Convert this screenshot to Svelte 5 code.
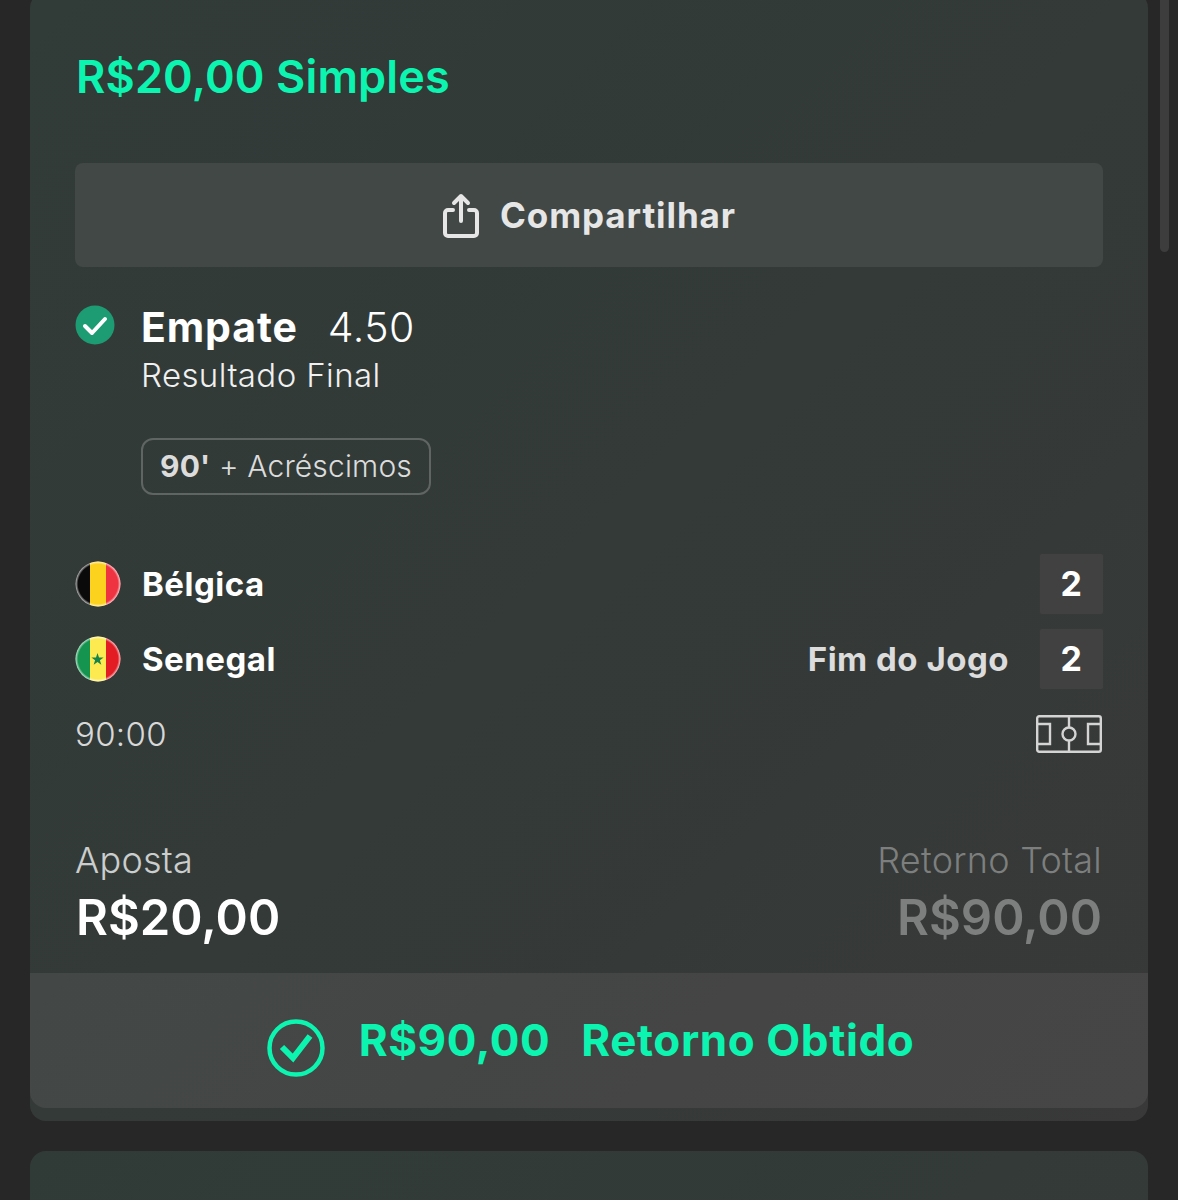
<script>
  const teams = [
    { name: 'Bélgica', score: 2, status: '' },
    { name: 'Senegal', score: 2, status: 'Fim do Jogo' }
  ];
</script>

<main class="page">
  <div class="scrollbar"></div>

  <section class="card">
    <div class="body">
      <h1 class="title">R$20,00 Simples</h1>

      <button class="share">
        <svg class="share-icon" viewBox="0 0 36 45" fill="none" stroke="#e6e6e6" stroke-width="4" stroke-linecap="round" stroke-linejoin="round">
          <path d="M10 17H5a3 3 0 0 0-3 3v20a3 3 0 0 0 3 3h26a3 3 0 0 0 3-3V20a3 3 0 0 0-3-3h-5" />
          <path d="M18 28V3M11 10l7-7 7 7" />
        </svg>
        <span>Compartilhar</span>
      </button>

      <div class="selection">
        <svg class="tick" viewBox="0 0 40 40">
          <circle cx="20" cy="20" r="19.5" fill="#1d9b73" />
          <path d="M10 21l7 7 13-14" fill="none" stroke="#fff" stroke-width="4" stroke-linecap="round" stroke-linejoin="round" />
        </svg>
        <div>
          <div class="pick"><strong>Empate</strong><span>4.50</span></div>
          <div class="market">Resultado Final</div>
          <div class="tag"><b>90'</b> + Acréscimos</div>
        </div>
      </div>

      <div class="teams">
        {#each teams as team, i}
          <div class="team">
            <svg class="flag" viewBox="0 0 46 46">
              <defs>
                <clipPath id="flag-{i}"><circle cx="23" cy="23" r="22.5" /></clipPath>
                <radialGradient id="gloss-{i}">
                  <stop offset="0.88" stop-color="#fff" stop-opacity="0" />
                  <stop offset="1" stop-color="#fff" stop-opacity="0.75" />
                </radialGradient>
              </defs>
              <g clip-path="url(#flag-{i})">
                {#if i === 0}
                  <rect width="15" height="46" fill="#0a0a0a" />
                  <rect x="15" width="16" height="46" fill="#fdd21e" />
                  <rect x="31" width="15" height="46" fill="#ef3340" />
                {:else}
                  <rect width="15" height="46" fill="#14944f" />
                  <rect x="15" width="16" height="46" fill="#fdea50" />
                  <rect x="31" width="15" height="46" fill="#e31b23" />
                  <path d="M22.5 17l1.5 4.4h4.6l-3.7 2.8 1.4 4.5-3.8-2.7-3.8 2.7 1.4-4.5-3.7-2.8h4.6z" fill="#14844a" />
                {/if}
              </g>
              <circle cx="23" cy="23" r="22.5" fill="url(#gloss-{i})" />
            </svg>
            <span class="name">{team.name}</span>
            {#if team.status}<span class="status">{team.status}</span>{/if}
            <span class="score">{team.score}</span>
          </div>
        {/each}
      </div>

      <div class="clock">
        <span>90:00</span>
        <svg class="pitch" viewBox="0 0 66 38" fill="none" stroke="#d4d4d4" stroke-width="2.4">
          <rect x="1.2" y="1.2" width="63.6" height="35.6" rx="2" />
          <path d="M33 1v11M33 26v11" />
          <circle cx="33" cy="19" r="6.5" />
          <path d="M1 9h13v20H1M65 9H52v20h13" />
        </svg>
      </div>

      <div class="totals">
        <div>
          <div class="label">Aposta</div>
          <div class="amount">R$20,00</div>
        </div>
        <div class="right">
          <div class="label">Retorno Total</div>
          <div class="amount">R$90,00</div>
        </div>
      </div>
    </div>

    <div class="footer">
      <svg class="won" viewBox="0 0 58 58" fill="none" stroke="#0cf5b0">
        <circle cx="29" cy="29" r="26.5" stroke-width="4.5" />
        <path d="M15 28l11 11 17-22" stroke-width="6" />
      </svg>
      <span class="won-amount">R$90,00</span>
      <span>Retorno Obtido</span>
    </div>
  </section>

  <section class="card next"></section>
</main>

<style>
  :global(body) {
    background: #272727;
  }
  .page {
    position: relative;
    height: 1200px;
    overflow: hidden;
    padding: 0 30px;
    box-sizing: border-box;
    font-family: Inter, "Liberation Sans", sans-serif;
    color: #fff;
  }
  .scrollbar {
    position: absolute;
    top: 0;
    left: 1160px;
    width: 9px;
    height: 252px;
    border-radius: 0 0 5px 5px;
    background: #3d3d3d;
  }
  .card {
    margin-top: -8px;
    height: 1129px;
    border-radius: 16px;
    background: linear-gradient(135deg, #313b38 0%, #333a38 50%, #383938 100%);
    display: flex;
    flex-direction: column;
  }
  .body {
    flex: 1;
    padding: 0 45px;
  }
  .title {
    margin: 57px 0 0 1px;
    font-size: 45px;
    line-height: 56px;
    font-weight: 600;
    letter-spacing: 0.15px;
    color: #0cf5b0;
  }
  .share {
    width: 100%;
    height: 104px;
    margin-top: 58px;
    padding: 0 0 0 1px;
    border: 0;
    border-radius: 8px;
    background: #414846;
    display: flex;
    align-items: center;
    justify-content: center;
    gap: 21px;
    font: 700 35px Inter, "Liberation Sans", sans-serif;
    letter-spacing: 0.9px;
    color: #e6e6e6;
  }
  .share-icon {
    width: 36px;
    height: 45px;
  }
  .selection {
    display: flex;
    gap: 26px;
    margin-top: 37px;
  }
  .tick {
    width: 40px;
    height: 40px;
    flex: none;
    margin-top: 1px;
  }
  .pick {
    display: flex;
    gap: 30px;
    font-size: 41px;
    line-height: 46px;
  }
  .pick strong {
    font-weight: 700;
    letter-spacing: 0.9px;
  }
  .pick span {
    font-weight: 300;
    letter-spacing: 0.5px;
  }
  .market {
    font-size: 33px;
    line-height: 40px;
    font-weight: 300;
    letter-spacing: 0.4px;
    margin-top: 5px;
    color: #f0f0f0;
  }
  .tag {
    display: inline-block;
    margin-top: 43px;
    padding: 0 17px;
    height: 53px;
    line-height: 53px;
    border: 2px solid #5f6562;
    border-radius: 12px;
    font-size: 30px;
    font-weight: 300;
    letter-spacing: 0.15px;
    color: #dcdcdc;
  }
  .tag b {
    font-weight: 700;
  }
  .teams {
    margin-top: 59px;
    display: flex;
    flex-direction: column;
    gap: 15px;
  }
  .team {
    display: flex;
    align-items: center;
    height: 60px;
    font-size: 33px;
    font-weight: 700;
    letter-spacing: 0.5px;
  }
  .flag {
    width: 46px;
    height: 46px;
    margin-right: 21px;
    flex: none;
  }
  .name {
    flex: 1;
  }
  .status {
    color: #dcdcdc;
    margin-right: 31px;
  }
  .score {
    width: 63px;
    height: 60px;
    line-height: 60px;
    text-align: center;
    background: #414141;
    border-radius: 2px;
    font-size: 34px;
  }
  .clock {
    display: flex;
    justify-content: space-between;
    align-items: center;
    margin-top: 25px;
    font-size: 33px;
    font-weight: 300;
    letter-spacing: 0.3px;
    color: #d8d8d8;
  }
  .pitch {
    width: 66px;
    height: 38px;
    margin-right: 1px;
  }
  .totals {
    display: flex;
    justify-content: space-between;
    margin: 84px 1px 0 0;
  }
  .right {
    text-align: right;
    color: #7d7f7e;
  }
  .label {
    font-size: 36px;
    line-height: 44px;
    font-weight: 300;
    letter-spacing: 0.25px;
    opacity: 0.75;
  }
  .right .label {
    opacity: 1;
  }
  .amount {
    font-size: 49px;
    line-height: 60px;
    font-weight: 600;
    margin-top: 6px;
    padding-left: 1px;
  }
  .footer {
    box-sizing: border-box;
    height: 135px;
    padding: 0 0 2px 3px;
    margin-bottom: 13px;
    border-radius: 0 0 16px 16px;
    background: linear-gradient(135deg, #434846 0%, #444544 60%, #464646 100%);
    display: flex;
    align-items: center;
    justify-content: center;
    font-size: 44px;
    font-weight: 700;
    letter-spacing: 0.6px;
    color: #0cf5b0;
  }
  .won {
    width: 58px;
    height: 58px;
    margin: 16px 34px 0 0;
  }
  .won-amount {
    margin-right: 31px;
  }
  .next {
    margin-top: 30px;
    height: 200px;
    background: linear-gradient(135deg, #303b37 0%, #343a38 100%);
  }
</style>
